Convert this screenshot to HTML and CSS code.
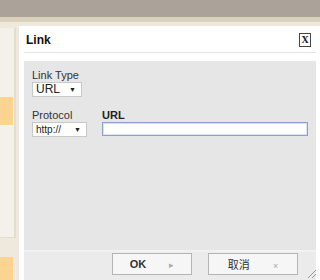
FILE: index.html
```html
<!DOCTYPE html>
<html>
<head>
<title>Link</title>
<link rel="stylesheet" href="styles.css">
</head>
<body>
  <div class="topbar"></div>
  <div class="strip"></div>
  <div class="page">
    <div class="side">
      <div class="side-panel">
        <div class="side-tab"></div>
      </div>
      <div class="side-tab bottom"></div>
    </div>

    <div class="dialog">
      <div class="dialog-title">
        <span>Link</span>
        <span class="close">X</span>
      </div>
      <div class="dialog-body">
        <div class="field">
          <label>Link Type</label>
          <div class="select type">URL <span class="arrow">&#9660;</span></div>
        </div>
        <div class="row">
          <div class="field">
            <label>Protocol</label>
            <div class="select proto">http:// <span class="arrow">&#9660;</span></div>
          </div>
          <div class="field grow">
            <label class="bold">URL</label>
            <input class="url" type="text">
          </div>
        </div>
      </div>
      <div class="dialog-footer">
        <button class="btn ok">OK <span class="mark">&#9656;</span></button>
        <button class="btn cancel">取消 <span class="mark">&#215;</span></button>
        <span class="grip"></span>
      </div>
    </div>
  </div>
</body>
</html>
```

FILE: styles.css
```css
body {
  margin: 0;
  width: 320px;
  height: 280px;
  overflow: hidden;
  background-color: #efe9dd;
  font-family: "Liberation Sans", Arial, sans-serif;
  font-size: 11px;
  color: #222;
}
.topbar {
  height: 17px;
  background-color: #aba29a;
}
.strip {
  height: 5px;
  background-color: #d9d1bd;
}
.page {
  display: flex;
  height: 258px;
}
.side {
  width: 19px;
  padding-top: 6px;
}
.side-panel {
  width: 14px;
  height: 140px;
  background-color: #f4f1ea;
  border-right: 2px solid #e2ddcf;
  border-bottom: 1px solid #e2ddcf;
  padding-top: 69px;
}
.side-tab {
  width: 13px;
  height: 28px;
  background-color: #fcd491;
}
.side-tab.bottom {
  margin-top: 19px;
  height: 30px;
}
.dialog {
  flex: 1;
  margin-top: 4px;
  background-color: #fff;
  padding: 0 4px 0 5px;
  display: flex;
  flex-direction: column;
}
.dialog-title {
  height: 25px;
  display: flex;
  align-items: center;
  justify-content: space-between;
  padding: 0 5px 0 2px;
  border-bottom: 1px solid #e4e4e4;
  margin-top: 1px;
  font-size: 12px;
  font-weight: bold;
  color: #111;
}
.close {
  width: 10px;
  height: 12px;
  border: 1px solid #444;
  font-size: 10px;
  line-height: 12px;
  text-align: center;
  font-weight: bold;
  font-family: "Liberation Serif", serif;
}
.dialog-body {
  margin-top: 8px;
  height: 180px;
  background-color: #e6e6e6;
  padding: 9px 8px 0 8px;
  border-bottom: 2px solid #f2f2f2;
}
.field label {
  display: block;
  color: #333;
  line-height: 11px;
}
.field label.bold {
  font-weight: bold;
  color: #222;
}
.select {
  margin-top: 1px;
  height: 13px;
  line-height: 13px;
  background-color: #fff;
  border: 1px solid #c8c8c8;
  padding-left: 3px;
  font-size: 12px;
  position: relative;
}
.select.type {
  width: 45px;
}
.select.proto {
  width: 50px;
  font-size: 10px;
}
.arrow {
  position: absolute;
  right: 5px;
  top: 0;
  font-size: 7px;
}
.row {
  display: flex;
  gap: 15px;
  margin-top: 13px;
}
.grow {
  flex: 1;
}
.url {
  display: block;
  margin: 1px 0 0 0;
  width: 100%;
  height: 14px;
  box-sizing: border-box;
  border: 1px solid #8a9fd4;
  box-shadow: inset 0 0 0 1px #d9e2f6;
  padding: 0;
}
.dialog-footer {
  flex: 1;
  background-color: #ebebeb;
  display: flex;
  align-items: flex-start;
  padding: 1px 0 0 88px;
  gap: 16px;
  position: relative;
}
.btn {
  height: 22px;
  background-color: #f6f6f6;
  border: 1px solid #b5b5b5;
  font-family: "Liberation Sans", "Noto Sans CJK SC", sans-serif;
  font-size: 11px;
  font-weight: bold;
  color: #333;
  padding: 0;
}
.btn.ok {
  width: 80px;
}
.btn.cancel {
  width: 90px;
  font-weight: normal;
}
.mark {
  color: #aaa;
  margin-left: 20px;
  font-weight: normal;
  font-size: 9px;
}
.grip {
  position: absolute;
  right: 0;
  bottom: 2px;
  width: 10px;
  height: 10px;
  background: repeating-linear-gradient(135deg, transparent 0 2px, #999 2px 3px);
  clip-path: polygon(100% 0, 100% 100%, 0 100%);
}
```
